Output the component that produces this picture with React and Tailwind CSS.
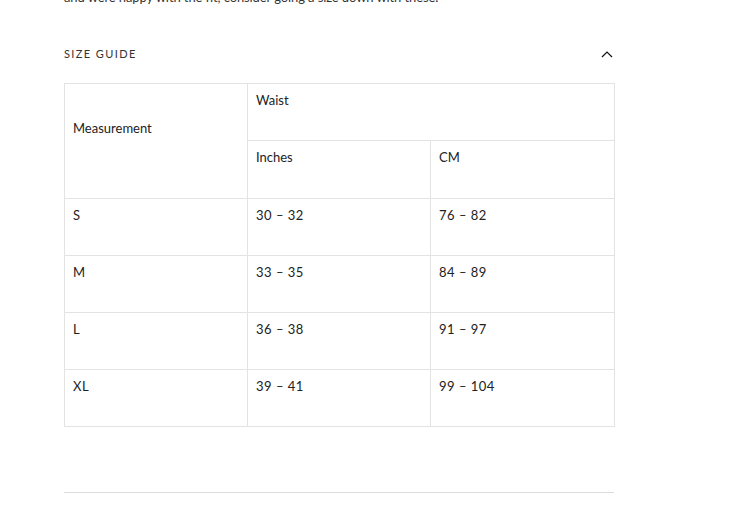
import React from "react";

const rows = [
  ["S", "30 – 32", "76 – 82"],
  ["M", "33 – 35", "84 – 89"],
  ["L", "36 – 38", "91 – 97"],
  ["XL", "39 – 41", "99 – 104"],
];

export default function App() {
  const cell = "border border-[#e3e3e3] align-top px-[8px] pt-[6px] h-[57px] text-left font-normal";
  return (
    <div className="w-[755px] h-[508px] bg-white overflow-hidden font-['Lato',sans-serif] text-[#222]">
      <div className="w-[550px] ml-[64px]">
        <p className="mt-[-13px] text-[13px] leading-[20px] text-[#333] tracking-[-0.1px] whitespace-nowrap">
          and were happy with the fit, consider going a size down with these.
        </p>
        <div className="flex items-center justify-between mt-[37px] h-[20px]">
          <span className="text-[11px] tracking-[1.4px] text-[#333]">SIZE GUIDE</span>
          <svg width="12" height="8" viewBox="0 0 12 8" className="mr-[1px]">
            <path d="M1 7 L6 2 L11 7" fill="none" stroke="#111" strokeWidth="1.2" />
          </svg>
        </div>
        <table className="mt-[19px] w-[550px] border-collapse text-[13px] leading-[20px] table-fixed">
          <colgroup>
            <col className="w-[183px]" />
            <col className="w-[183px]" />
            <col className="w-[184px]" />
          </colgroup>
          <thead>
            <tr>
              <th rowSpan={2} className={cell + " pt-[34px]"}>Measurement</th>
              <th colSpan={2} className={cell}>Waist</th>
            </tr>
            <tr>
              <th className={cell + " h-[58px]"}>Inches</th>
              <th className={cell + " h-[58px]"}>CM</th>
            </tr>
          </thead>
          <tbody>
            {rows.map((r) => (
              <tr key={r[0]}>
                {r.map((v, i) => (
                  <td key={i} className={cell + " tracking-[0.5px]"}>{v}</td>
                ))}
              </tr>
            ))}
          </tbody>
        </table>
        <div className="mt-[65px] border-t border-[#dcdcdc]" />
      </div>
    </div>
  );
}
